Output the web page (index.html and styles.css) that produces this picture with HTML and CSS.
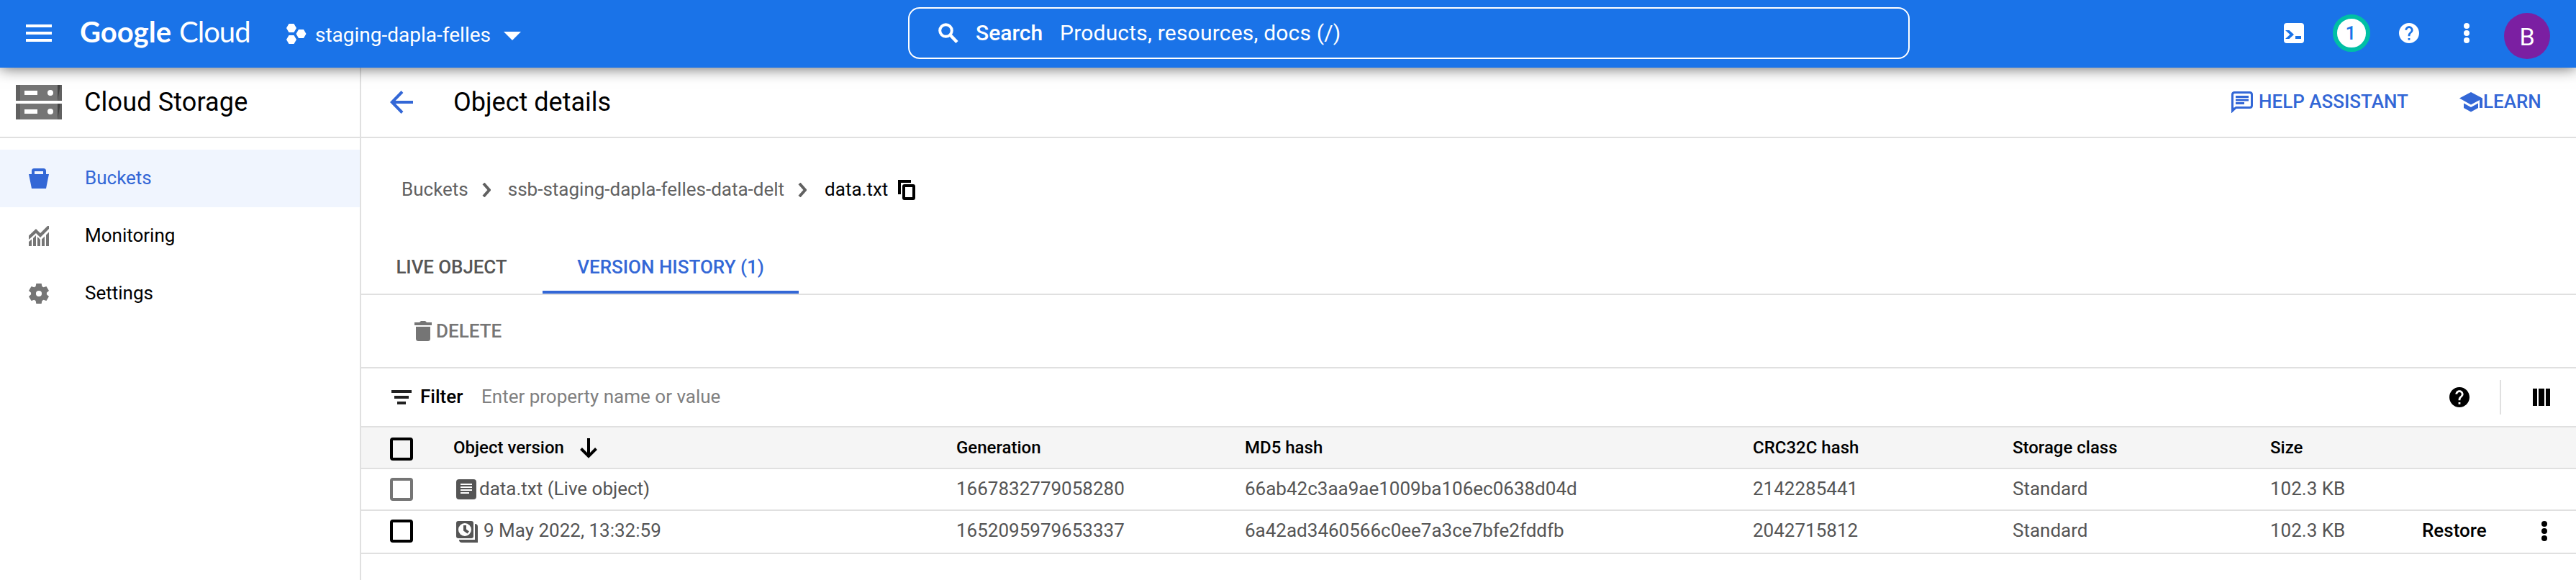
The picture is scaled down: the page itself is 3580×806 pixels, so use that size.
FILE: index.html
```html
<!DOCTYPE html>
<html lang="en">
<head>
<meta charset="utf-8">
<title>Object details – Cloud Storage</title>
<link rel="stylesheet" href="styles.css">
</head>
<body>
<header class="topbar">
  <svg class="menu-icon" width="36" height="24" viewBox="0 0 36 24" fill="#fff"><path d="M0 0h36v4H0zM0 10h36v4H0zM0 20h36v4H0z"/></svg>
  <div class="logo"><span class="logo-google">Google</span><span class="logo-cloud">Cloud</span></div>
  <div class="project">
    <svg width="28" height="28" viewBox="0 0 28 28" fill="#fff"><path d="M3.500 0h7L14 6l-3.500 6h-7L0 6zM3.500 16h7L14 22l-3.500 6h-7L0 22zM17 8h7l3.500 6-3.500 6h-7l-3.500-6z"/></svg>
    <span class="project-name">staging-dapla-felles</span>
    <svg class="caret" width="24" height="12" viewBox="0 0 24 12" fill="#fff"><path d="M0 0h24L12 12z"/></svg>
  </div>
  <div class="search">
    <svg width="28" height="28" viewBox="0 0 28 28" fill="none" stroke="#fff"><circle cx="10.500" cy="10.500" r="8.300" stroke-width="4"/><path d="M16 16l10 10.500" stroke-width="4.500"/></svg>
    <span class="search-label">Search</span>
    <span class="search-hint">Products, resources, docs (/)</span>
  </div>
  <div class="tools">
    <svg width="28" height="28" viewBox="0 0 28 28"><rect width="28" height="28" rx="4" fill="#fff"/><path d="M2 10h5.500l6.500 6-6.500 6H2l6.500-6zM16 18h8v4h-8z" fill="#1a73e8"/></svg>
    <span class="notif">1</span>
    <svg class="help-icon" width="28" height="28" viewBox="2 2 20 20" fill="#fff"><path d="M12 2C6.480 2 2 6.480 2 12s4.480 10 10 10 10-4.480 10-10S17.520 2 12 2zm1 17h-2v-2h2v2zm2.070-7.750l-.9.920C13.450 12.900 13 13.500 13 15h-2v-.5c0-1.100.45-2.100 1.170-2.830l1.240-1.260c.37-.36.59-.86.59-1.410 0-1.100-.9-2-2-2s-2 .9-2 2H8c0-2.210 1.790-4 4-4s4 1.790 4 4c0 .88-.36 1.680-.93 2.250z"/></svg>
    <svg class="more-icon" width="8" height="28" viewBox="0 0 8 28" fill="#fff"><circle cx="4" cy="4" r="4"/><circle cx="4" cy="14" r="4"/><circle cx="4" cy="24" r="4"/></svg>
    <span class="avatar">B</span>
  </div>
</header>
<div class="page">
  <nav class="sidebar">
    <div class="product">
      <svg width="64" height="48" viewBox="0 0 64 48"><path d="M0 0h64v22H0zM0 26h64v22H0z" fill="#757575"/><path d="M0 0h6v22H0zM0 26h6v22H0zM58 0h6v22h-6zM58 26h6v22h-6z" fill="#616161"/><path d="M58 0h4l-4 22zM58 26h4l-4 22z" fill="#424242"/><path d="M12 8h18v6H12zM12 34h18v6H12z" fill="#fff"/><circle cx="48" cy="11" r="4" fill="#fff"/><circle cx="48" cy="37" r="4" fill="#fff"/></svg>
      <span>Cloud Storage</span>
    </div>
    <a class="nav-item active"><svg width="28" height="28" viewBox="0 0 28 28" fill="#3367d6"><path fill-rule="evenodd" d="M0 8h4V3.500Q4 0 7.500 0h13Q24 0 24 3.500V8h4l-4 20H4zM8 4v4h12V4z"/></svg><span>Buckets</span></a>
    <a class="nav-item"><svg width="28" height="28" viewBox="0 0 28 28" fill="#757575"><path d="M0 13.500L10 4l6 6L26 0h2v4L16 16l-6-6L0 19zM0 22l4-3.500V28H0zM6 17l4-4v15H6zM12 15l4 4v9h-4zM18 18.500l4-4V28h-4zM24 12.500l4-4V28h-4z"/></svg><span>Monitoring</span></a>
    <a class="nav-item"><svg width="28" height="28" viewBox="2 2 20 20" fill="#757575"><path fill-rule="evenodd" d="M9.400 2h5.200l.55 2.900 1.500.87 2.800-1L22 9.200l-2.200 1.900v1.800L22 14.800l-2.550 4.430-2.800-1-1.500.87L14.600 22H9.400l-.55-2.900-1.500-.87-2.800 1L2 14.800l2.200-1.900v-1.800L2 9.200l2.550-4.430 2.800 1 1.500-.87zM12 9.100a2.900 2.900 0 1 0 0 5.800 2.900 2.900 0 0 0 0-5.800z"/></svg><span>Settings</span></a>
  </nav>
  <main class="main">
    <div class="titlebar">
      <svg class="back-icon" width="32" height="32" viewBox="0 0 32 32" fill="none" stroke="#3367d6" stroke-width="4"><path d="M32 16H4M17 1.500L2.800 16 17 30.500"/></svg>
      <h1 class="title">Object details</h1>
      <a class="action help-assistant"><svg width="30" height="30" viewBox="0 0 30 30"><path d="M1.500 27V4.500q0-3 3-3h21q3 0 3 3v15q0 3-3 3h-19z" fill="none" stroke="#3367d6" stroke-width="3"/><path d="M0 22v8l7-7zM6 6h18v3H6zM6 10.500h18v3H6zM6 15h12v3H6z" fill="#3367d6"/></svg><span>HELP ASSISTANT</span></a>
      <a class="action learn"><svg width="32" height="28" viewBox="0 0 32 28" fill="#3367d6"><path d="M0 8.500L16 0l16 8.500V22h-4V11L16 17.500zM6 15.500l10 5.500 10-5.500V22l-10 5.500L6 22z"/></svg><span>LEARN</span></a>
    </div>
    <div class="breadcrumb">
      <span>Buckets</span>
      <svg class="chev" width="13" height="20" viewBox="0 0 13 20" fill="none" stroke="#616161" stroke-width="4"><path d="M3 1l8 9-8 9"/></svg>
      <span class="crumb-bucket">ssb-staging-dapla-felles-data-delt</span>
      <svg class="chev chev-last" width="13" height="20" viewBox="0 0 13 20" fill="none" stroke="#616161" stroke-width="4"><path d="M3 1l8 9-8 9"/></svg>
      <span class="current">data.txt</span>
      <svg class="copy" width="24" height="28" viewBox="0 0 24 28" fill="none" stroke="#000" stroke-width="4"><path d="M18 2H2v18"/><rect x="8" y="8" width="14" height="18" rx="1"/></svg>
    </div>
    <div class="tabs"><a class="tab tab-live">LIVE OBJECT</a><a class="tab tab-history">VERSION HISTORY (1)</a></div>
    <div class="actions"><svg width="24" height="28" viewBox="0 0 24 28" fill="#757575"><path d="M0 2h7l2-2h6l2 2h7v4H0zM2 8h20v16.500q0 3.500-3.500 3.500h-13Q2 28 2 24.500z"/></svg><span>DELETE</span></div>
    <div class="filter">
      <svg width="28" height="20" viewBox="0 0 28 20" fill="#212121"><path d="M0 0h28v4H0zM4 8h20v4H4zM8 16h12v4H8z"/></svg>
      <span class="filter-label">Filter</span>
      <span class="filter-hint">Enter property name or value</span>
      <svg class="filter-help" width="28" height="28" viewBox="2 2 20 20"><path d="M12 2C6.480 2 2 6.480 2 12s4.480 10 10 10 10-4.480 10-10S17.520 2 12 2zm1 17h-2v-2h2v2zm2.070-7.750l-.9.920C13.450 12.900 13 13.500 13 15h-2v-.5c0-1.100.45-2.100 1.170-2.830l1.240-1.260c.37-.36.59-.86.59-1.410 0-1.100-.9-2-2-2s-2 .9-2 2H8c0-2.210 1.790-4 4-4s4 1.790 4 4c0 .88-.36 1.680-.93 2.250z"/></svg>
      <span class="separator"></span>
      <svg class="columns-icon" width="24" height="24" viewBox="0 0 24 24"><path d="M0 0h6v24H0zM8 0h8v24H8zM18 0h6v24h-6z"/></svg>
    </div>
    <div class="table">
      <div class="row head">
        <div><span class="box"></span></div>
        <div>Object version<svg class="sort" width="24" height="28" viewBox="0 0 24 28" fill="none" stroke="#000" stroke-width="4"><path d="M12 0v25M1.500 14.500L12 25l10.500-10.500"/></svg></div>
        <div>Generation</div><div>MD5 hash</div><div>CRC32C hash</div><div>Storage class</div><div>Size</div>
      </div>
      <div class="row">
        <div><span class="box disabled"></span></div>
        <div><svg class="doc" width="28" height="28" viewBox="0 0 28 28"><rect width="28" height="28" rx="4" fill="#555"/><path d="M6 6h16v2H6zM6 10h16v2H6zM6 14h16v2H6zM6 18h12v2H6z" fill="#fff"/></svg><span class="value live-name">data.txt (Live object)</span></div>
        <div class="value">1667832779058280</div><div class="value">66ab42c3aa9ae1009ba106ec0638d04d</div><div class="value">2142285441</div><div class="value">Standard</div><div class="value">102.3 KB</div>
      </div>
      <div class="row last">
        <div><span class="box"></span></div>
        <div><svg class="doc version" width="30" height="30" viewBox="0 0 30 30" fill="#555"><rect width="24" height="24" rx="3"/><path d="M26 4q4 0 4 4v22H8q-4 0-4-4h22z"/><circle cx="12" cy="12" r="9" fill="#fff"/><path d="M10 6h4v5.500l4 3-2.500 3L10 13.500z"/></svg><span class="value old-name">9 May 2022, 13:32:59</span></div>
        <div class="value">1652095979653337</div><div class="value">6a42ad3460566c0ee7a3ce7bfe2fddfb</div><div class="value">2042715812</div><div class="value">Standard</div><div class="value">102.3 KB</div>
        <div class="value restore">Restore</div>
        <div><svg class="row-more" width="8" height="28" viewBox="0 0 8 28"><circle cx="4" cy="4" r="4"/><circle cx="4" cy="14" r="4"/><circle cx="4" cy="24" r="4"/></svg></div>
      </div>
    </div>
  </main>
</div>
</body>
</html>
```
FILE: styles.css
```css
* { box-sizing: border-box; }
body { margin: 0; width: 3580px; height: 806px; overflow: hidden; background: #fff; color: #000; font: 26px/30px Roboto, sans-serif; }
svg { display: block; flex: none; }
span, h1 { white-space: nowrap; }

.topbar { position: relative; z-index: 1; display: flex; height: 94px; padding-left: 36px; background: #1a73e8; color: #fff; box-shadow: 0 0 20px rgba(0, 0, 0, .65); }
.menu-icon { margin-top: 34px; }
.logo { display: flex; width: 236px; margin: 20px 0 0 39px; font: 40px/48px Lato, sans-serif; }
.logo-google { flex: none; width: 135px; font-weight: 700; }
.logo-cloud { margin-left: 3px; font-weight: 400; letter-spacing: -1px; }
.project { display: flex; width: 901px; padding: 33px 0 0 51px; font-size: 28px; line-height: 32px; }
.project-name { width: 262px; margin-left: 12px; }
.caret { margin-top: 11px; }
.search { display: flex; width: 1392px; height: 72px; margin: 10px 0 0 14px; padding: 20px 0 0 40px; border: 2px solid #fff; border-radius: 16px; font-size: 30px; line-height: 32px; }
.search span { margin-top: -2px; }
.search .search-label { width: 117px; margin-left: 24px; font-weight: 500; }
.search-hint { letter-spacing: .2px; }
.tools { display: flex; margin-left: 520px; padding-top: 18px; }
.tools svg { margin-top: 14px; }
.notif { width: 52px; height: 52px; margin: 2px 0 0 40px; padding-right: 2px; border: 6px solid #00bfa5; border-radius: 50%; background: #fff; color: #1a73e8; font-weight: 500; line-height: 40px; text-align: center; }
.tools .help-icon { margin-left: 40px; }
.tools .more-icon { margin-left: 62px; }
.avatar { width: 64px; height: 64px; margin-left: 48px; border-radius: 50%; background: #7b1fa2; font-size: 34px; line-height: 66px; text-align: center; }

.page { display: flex; height: 712px; }
.sidebar { width: 502px; border-right: 2px solid #e0e0e0; }
.product { display: flex; align-items: center; height: 98px; margin-bottom: 16px; padding-left: 22px; border-bottom: 2px solid #e0e0e0; font-size: 36px; line-height: 42px; }
.product span { margin-left: 31px; letter-spacing: .15px; }
.nav-item { display: flex; align-items: center; height: 80px; padding: 0 0 0 40px; }
.nav-item span { margin: -2px 0 0 50px; }
.active { background: #f0f5fe; color: #3367d6; }

.main { width: 3078px; }
.titlebar { display: flex; align-items: center; height: 98px; padding-left: 40px; border-bottom: 2px solid #e0e0e0; }
.title { width: 2471px; margin: 0 0 0 56px; font-size: 36px; font-weight: 400; line-height: 42px; }
.action { display: flex; align-items: center; color: #3367d6; font-weight: 500; }
.action span { margin-top: -2px; }
.help-assistant { width: 317px; }
.help-assistant span { margin-left: 8px; }
.learn span { margin-left: 1px; }

.breadcrumb { display: flex; align-items: center; height: 144px; padding-left: 56px; color: #616161; }
.breadcrumb > span { margin-top: -2px; }
.chev { margin: 0 24px 0 18px; }
.chev-last { margin-right: 25px; }
.breadcrumb .current { width: 101px; color: #000; }
.copy { margin-left: 1px; }
.tabs { display: flex; height: 74px; border-bottom: 2px solid #e0e0e0; font-weight: 500; line-height: 70px; text-align: center; }
.tab-live { width: 252px; padding-right: 1px; color: #555; letter-spacing: -.1px; }
.tab-history { width: 356px; border-bottom: 4px solid #3367d6; color: #3367d6; }
.actions { display: flex; align-items: center; height: 102px; padding-left: 74px; border-bottom: 2px solid #e0e0e0; color: #757575; font-weight: 500; }
.actions span { margin-left: 6px; }
.filter { display: flex; align-items: center; height: 82px; padding-left: 42px; border-bottom: 2px solid #e0e0e0; }
.filter span { margin-top: -2px; }
.filter .filter-label { width: 85px; margin-left: 12px; font-weight: 500; }
.filter-hint { width: 2735px; color: #808080; }
.filter .separator { width: 2px; height: 48px; margin: 0 44px 0 42px; background: #e0e0e0; }

.row { display: grid; grid-template-columns: 88px 699px 401px 706px 361px 358px 210px 166px 40px; align-items: center; height: 58px; padding-left: 40px; border-bottom: 2px solid #e0e0e0; color: #555; }
.row > div { display: flex; align-items: center; white-space: nowrap; }
.row .value { padding-bottom: 2px; }
.head { height: 58px; background: #f5f5f5; color: #000; font-size: 24px; font-weight: 500; }
.last { height: 60px; padding-bottom: 2px; }
.box { width: 32px; height: 32px; border: 4px solid #000; border-radius: 4px; }
.head .box { margin-top: 4px; }
.disabled { border-color: #757575; }
.sort { margin: 2px 0 0 22px; }
.doc { margin-left: 4px; }
.version { margin-top: 2px; }
.live-name { margin-left: 4px; }
.old-name { margin-left: 8px; }
.restore { padding-left: 1px; color: #000; font-weight: 500; }
.row-more { margin-left: 1px; }
```
